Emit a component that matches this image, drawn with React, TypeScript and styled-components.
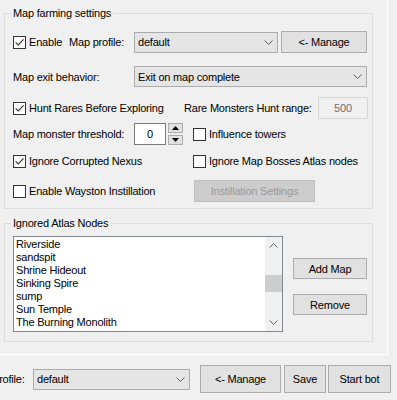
import styled, { createGlobalStyle } from "styled-components";

/* ── Global ─────────────────────────────────────────────── */

const GlobalStyle = createGlobalStyle`
  html, body {
    margin: 0;
    padding: 0;
    background: #f0f0f0;
  }
  body {
    font-family: "Liberation Sans", Arial, sans-serif;
    font-size: 11px;
    letter-spacing: -0.2px;
    color: #000;
  }
  * {
    box-sizing: border-box;
  }
`;

/* ── Layout ─────────────────────────────────────────────── */

const Root = styled.div`
  width: 397px;
  height: 400px;
  overflow: hidden;
  background: #f0f0f0;
`;

const Panel = styled.div`
  width: 388px;
  height: 355px;
  padding-top: 6px;
  border-right: 1px solid #fff;
  border-bottom: 1px solid #fff;
`;

const Group = styled.fieldset<{ $mt?: number; $pb: number }>`
  margin: ${(p) => p.$mt ?? 0}px 0 0 4px;
  width: 369px;
  min-width: 0;
  padding: 0 0 ${(p) => p.$pb}px 8px;
  border: 1px solid #dcdcdc;
`;

const Legend = styled.legend`
  margin-left: -2px;
  padding: 0 2px;
  line-height: 14px;
`;

const Row = styled.div<{ $mt: number; $h?: number }>`
  display: flex;
  align-items: center;
  height: ${(p) => p.$h ?? 22}px;
  margin-top: ${(p) => p.$mt}px;
`;

const Cell = styled.div<{ $w: number; $ml?: number }>`
  flex: 0 0 ${(p) => p.$w}px;
  margin-left: ${(p) => p.$ml ?? 0}px;
  display: flex;
  align-items: center;
  white-space: nowrap;
`;

/* ── Controls ───────────────────────────────────────────── */

const CheckLabel = styled.label`
  display: inline-flex;
  align-items: center;
  gap: 3px;
  white-space: nowrap;
`;

const Box = styled.span`
  flex: 0 0 13px;
  width: 13px;
  height: 13px;
  border: 1px solid #333;
  background: #fff;
  display: flex;
  align-items: center;
  justify-content: center;
`;

const Combo = styled.div<{ $w: number }>`
  flex: 0 0 ${(p) => p.$w}px;
  height: 21px;
  border: 1px solid #acacac;
  background: #e5e5e5;
  display: flex;
  align-items: center;
  justify-content: space-between;
  padding: 0 4px 0 3px;
`;

const Button = styled.button<{ $w: number; $h: number; $ml?: number; $mt?: number }>`
  flex-shrink: 0;
  width: ${(p) => p.$w}px;
  height: ${(p) => p.$h}px;
  margin: ${(p) => p.$mt ?? 0}px 0 0 ${(p) => p.$ml ?? 0}px;
  padding: 0;
  border: 1px solid #adadad;
  background: #e1e1e1;
  font: inherit;
  letter-spacing: inherit;
  color: #000;

  &:disabled {
    background: #cccccc;
    border-color: #bfbfbf;
    color: #9a9a9a;
  }
`;

const TextBox = styled.div<{ $w: number; $disabled?: boolean }>`
  flex: 0 0 ${(p) => p.$w}px;
  height: 22px;
  border: 1px solid ${(p) => (p.$disabled ? "#d7d7d7" : "#7a7a7a")};
  background: ${(p) => (p.$disabled ? "#f0f0f0" : "#fff")};
  color: ${(p) => (p.$disabled ? "#6d6d6d" : "#000")};
  display: flex;
  align-items: center;
  justify-content: center;
`;

const Spin = styled.div`
  flex: 0 0 15px;
  margin-left: 2px;
  height: 22px;
  display: flex;
  flex-direction: column;
  justify-content: space-between;
`;

const SpinBtn = styled.div`
  height: 10px;
  border: 1px solid #adadad;
  background: #e1e1e1;
  display: flex;
  align-items: center;
  justify-content: center;
`;

const ListRow = styled.div`
  display: flex;
  align-items: flex-start;
  margin-top: 6px;
`;

const ListBox = styled.div`
  flex: 0 0 270px;
  height: 96px;
  border: 1px solid #828790;
  background: #fff;
  display: flex;
`;

const Items = styled.div`
  flex: 1;
  padding: 1px 0 0 2px;
  overflow: hidden;
`;

const Item = styled.div`
  height: 13px;
  line-height: 13px;
  white-space: nowrap;
`;

const ScrollBar = styled.div`
  flex: 0 0 17px;
  background: #f0f0f0;
  display: flex;
  flex-direction: column;
`;

const ScrollArrow = styled.div`
  height: 17px;
  display: flex;
  align-items: center;
  justify-content: center;
`;

const Track = styled.div`
  flex: 1;
`;

const Thumb = styled.div`
  height: 17px;
  background: #cdcdcd;
`;

const SideButtons = styled.div`
  margin-left: 10px;
  display: flex;
  flex-direction: column;
  align-items: flex-start;
`;

const BottomBar = styled.div`
  display: flex;
  align-items: center;
  height: 28px;
  margin-top: 10px;
`;

/* ── Pieces ─────────────────────────────────────────────── */

function Check({ on, children }: { on?: boolean; children: string }) {
  return (
    <CheckLabel>
      <Box>
        {on && (
          <svg width="11" height="11" viewBox="0 0 11 11">
            <path d="M1.6 5.4 L4.2 8 L9.6 2.4" fill="none" stroke="#333" strokeWidth="1.1" />
          </svg>
        )}
      </Box>
      {children}
    </CheckLabel>
  );
}

function Chevron({ up }: { up?: boolean }) {
  return (
    <svg width="9" height="5" viewBox="0 0 9 5">
      <path
        d={up ? "M0.5 4.5 L4.5 0.5 L8.5 4.5" : "M0.5 0.5 L4.5 4.5 L8.5 0.5"}
        fill="none"
        stroke="#606060"
      />
    </svg>
  );
}

function Dropdown({ w, value }: { w: number; value: string }) {
  return (
    <Combo $w={w}>
      <span>{value}</span>
      <Chevron />
    </Combo>
  );
}

const nodes = [
  "Riverside",
  "sandspit",
  "Shrine Hideout",
  "Sinking Spire",
  "sump",
  "Sun Temple",
  "The Burning Monolith",
];

/* ── Component ───────────────────────────────────────────── */

export default function App() {
  return (
    <Root>
      <GlobalStyle />
      <Panel>
        <Group $pb={6}>
          <Legend>Map farming settings</Legend>

          <Row $mt={11}>
            <Cell $w={56}>
              <Check on>Enable</Check>
            </Cell>
            <Cell $w={65}>Map profile:</Cell>
            <Dropdown w={144} value="default" />
            <Button $w={86} $h={22} $ml={3}>
              {"<- Manage"}
            </Button>
          </Row>

          <Row $mt={13} $h={21}>
            <Cell $w={121}>Map exit behavior:</Cell>
            <Dropdown w={233} value="Exit on map complete" />
          </Row>

          <Row $mt={10}>
            <Cell $w={171}>
              <Check on>Hunt Rares Before Exploring</Check>
            </Cell>
            <Cell $w={134}>Rare Monsters Hunt range:</Cell>
            <TextBox $w={50} $disabled>
              500
            </TextBox>
          </Row>

          <Row $mt={4}>
            <Cell $w={121}>Map monster threshold:</Cell>
            <TextBox $w={32}>0</TextBox>
            <Spin>
              <SpinBtn>
                <svg width="7" height="4" viewBox="0 0 7 4">
                  <path d="M0 4 L3.5 0 L7 4 Z" fill="#000" />
                </svg>
              </SpinBtn>
              <SpinBtn>
                <svg width="7" height="4" viewBox="0 0 7 4">
                  <path d="M0 0 L3.5 4 L7 0 Z" fill="#000" />
                </svg>
              </SpinBtn>
            </Spin>
            <Cell $w={170} $ml={10}>
              <Check>Influence towers</Check>
            </Cell>
          </Row>

          <Row $mt={5}>
            <Cell $w={180}>
              <Check on>Ignore Corrupted Nexus</Check>
            </Cell>
            <Cell $w={170}>
              <Check>Ignore Map Bosses Atlas nodes</Check>
            </Cell>
          </Row>

          <Row $mt={8}>
            <Cell $w={181}>
              <Check>Enable Wayston Instillation</Check>
            </Cell>
            <Button $w={121} $h={22} disabled>
              Instillation Settings
            </Button>
          </Row>
        </Group>

        <Group $mt={7} $pb={9}>
          <Legend>Ignored Atlas Nodes</Legend>
          <ListRow>
            <ListBox>
              <Items>
                {nodes.map((n) => (
                  <Item key={n}>{n}</Item>
                ))}
              </Items>
              <ScrollBar>
                <ScrollArrow>
                  <Chevron up />
                </ScrollArrow>
                <Track>
                  <Thumb style={{ marginTop: 21 }} />
                </Track>
                <ScrollArrow>
                  <Chevron />
                </ScrollArrow>
              </ScrollBar>
            </ListBox>
            <SideButtons>
              <Button $w={74} $h={21} $mt={22}>
                Add Map
              </Button>
              <Button $w={74} $h={21} $mt={15}>
                Remove
              </Button>
            </SideButtons>
          </ListRow>
        </Group>
      </Panel>

      <BottomBar>
        <Cell $w={41} $ml={-8}>
          Profile:
        </Cell>
        <Dropdown w={157} value="default" />
        <Button $w={81} $h={28} $ml={10}>
          {"<- Manage"}
        </Button>
        <Button $w={42} $h={28} $ml={3}>
          Save
        </Button>
        <Button $w={63} $h={28} $ml={2}>
          Start bot
        </Button>
      </BottomBar>
    </Root>
  );
}
